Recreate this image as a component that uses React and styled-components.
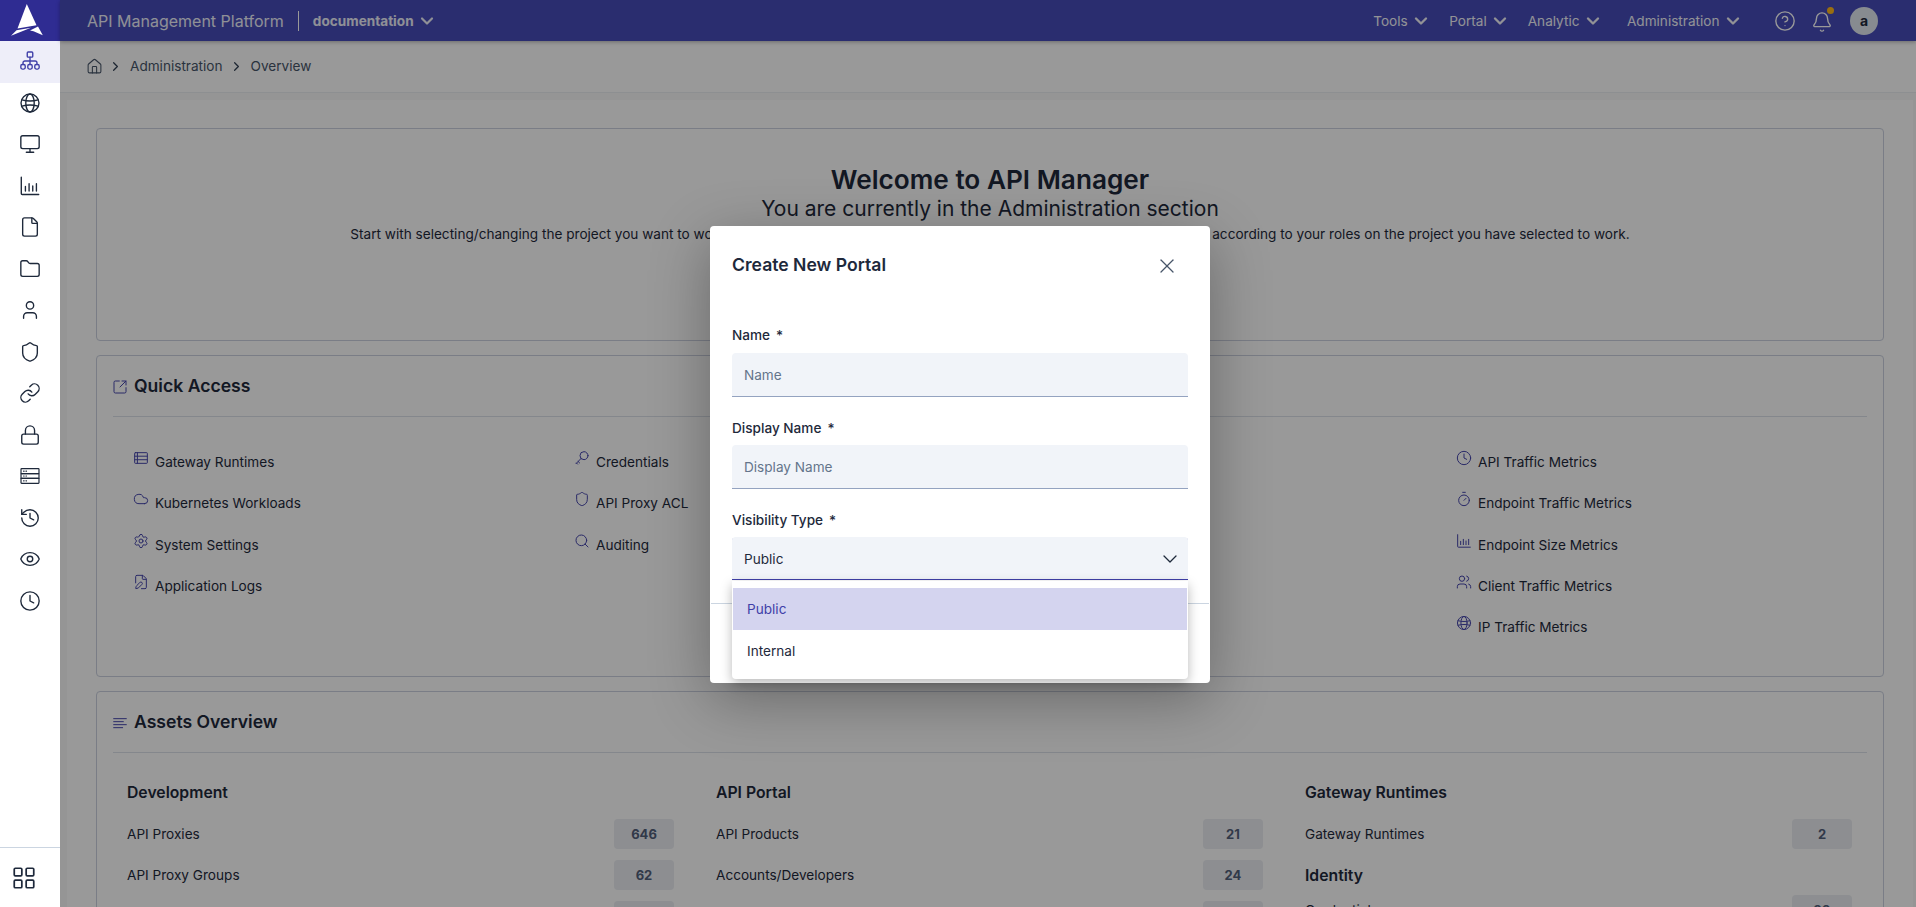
import React from 'react';
import styled, { createGlobalStyle } from 'styled-components';
import {
  Bell,
  ChevronDown,
  ChevronRight,
  CircleHelp,
  Clock,
  Cloud,
  Eye,
  File,
  FilePen,
  Folder,
  History,
  House,
  LayoutGrid,
  Link,
  Lock,
  Monitor,
  Search,
  Settings,
  Shield,
  SquareArrowOutUpRight,
  Timer,
  User,
  Users,
  X,
} from 'lucide-react';

const GlobalStyle = createGlobalStyle`
  html, body {
    margin: 0;
    padding: 0;
    height: 100%;
    overflow: hidden;
    font-family: Inter, "Liberation Sans", sans-serif;
    color: #1e293b;
  }
  * {
    box-sizing: border-box;
  }
`;

const Shell = styled.div`
  position: relative;
  width: 1916px;
  height: 907px;
  display: grid;
  grid-template-columns: 60px 1fr;
  overflow: hidden;
  background: #f8f8f8;
`;

const Sidebar = styled.aside`
  display: flex;
  flex-direction: column;
  height: 907px;
  background: #ffffff;
`;

const LogoBlock = styled.div`
  height: 41px;
  flex: none;
  background: #2f2c92;
  svg {
    display: block;
  }
`;

const SideNav = styled.nav`
  flex: 1;
  display: flex;
  flex-direction: column;
`;

const SideItem = styled.div`
  height: 41.5px;
  flex: none;
  display: flex;
  align-items: center;
  justify-content: center;
  padding-bottom: 1px;
  background: ${(props) => (props.$active ? '#eeeef9' : 'transparent')};
  color: ${(props) => (props.$active ? '#3f3fa8' : '#1e293b')};
`;

const SideFooter = styled.div`
  height: 60px;
  flex: none;
  border-top: 1px solid #cbd5e1;
  display: flex;
  align-items: center;
  padding-left: 11px;
  color: #1e293b;
`;

const MainColumn = styled.div`
  display: flex;
  flex-direction: column;
  min-width: 0;
  height: 907px;
`;

const Header = styled.header`
  height: 41px;
  flex: none;
  position: relative;
  z-index: 1;
  display: flex;
  align-items: center;
  padding: 0 38px 0 27px;
  background: #474cba;
  color: #ffffff;
  box-shadow: 0 1px 4px rgba(0, 0, 0, 0.3);
`;

const PlatformName = styled.div`
  font-size: 16px;
  font-weight: 400;
  color: #eef0fb;
`;

const HeaderDivider = styled.div`
  width: 1px;
  height: 20px;
  margin: 0 14px 0 14px;
  background: #ffffff;
`;

const ProjectName = styled.div`
  display: flex;
  align-items: center;
  gap: 3px;
  font-size: 13.6px;
  font-weight: 700;
  color: #eef0fb;
`;

const HeaderNav = styled.nav`
  margin-left: auto;
  display: flex;
  align-items: center;
`;

const NavItem = styled.div`
  display: flex;
  align-items: center;
  gap: 3.5px;
  margin-left: ${(props) => props.$gap}px;
  font-size: 13.6px;
  font-weight: 400;
  color: #f3f4fb;
`;

const HeaderIcons = styled.div`
  display: flex;
  align-items: center;
  margin-left: 31px;
  gap: 15px;
`;

const BellWrap = styled.div`
  position: relative;
  display: flex;
  align-items: center;
  margin-top: 2px;
`;

const BellDot = styled.span`
  position: absolute;
  top: -4px;
  right: -1px;
  width: 7px;
  height: 7px;
  border-radius: 50%;
  background: #ffb81c;
`;

const Avatar = styled.div`
  width: 28px;
  height: 28px;
  margin-left: 2px;
  border-radius: 50%;
  background: #e2e8f0;
  color: #1e293b;
  display: flex;
  align-items: center;
  justify-content: center;
  font-size: 14px;
  font-weight: 700;
`;

const Breadcrumb = styled.div`
  height: 52px;
  flex: none;
  display: flex;
  align-items: center;
  padding: 0 0 1px 26px;
  background: #ffffff;
  border-bottom: 1px solid #eceef2;
  font-size: 13.6px;
  color: #475569;
`;

const CrumbSep = styled.span`
  display: flex;
  margin: 0 7px 0 ${(props) => (props.$first ? 5 : 6)}px;
  color: #334155;
`;

const Content = styled.main`
  flex: 1;
  min-height: 0;
  padding: 7px 3px 0 7px;
`;

const Panel = styled.div`
  height: 100%;
  background: #ffffff;
  padding: 28px 29px 0;
  display: flex;
  flex-direction: column;
  gap: 14px;
`;

const Card = styled.section`
  flex: none;
  height: ${(props) => props.$height}px;
  border: 1px solid #cbd1df;
  border-radius: 4px;
  padding: 0 16px;
  background: #ffffff;
`;

const Welcome = styled.div`
  padding-top: 35px;
  text-align: center;
`;

const WelcomeTitle = styled.div`
  font-size: 26.2px;
  line-height: 32px;
  font-weight: 600;
`;

const WelcomeSub = styled.div`
  font-size: 21px;
  line-height: 26px;
`;

const WelcomeText = styled.div`
  margin-top: 2px;
  font-size: 13.6px;
  line-height: 20px;
`;

const CardHeader = styled.div`
  height: 61px;
  display: flex;
  align-items: center;
  gap: 6px;
  padding-bottom: 2px;
  border-bottom: 1px solid #dde1ea;
  font-size: 17.6px;
  font-weight: 600;
  color: #1e293b;
  svg {
    color: #4646ad;
    margin: 4px 0 0 -1px;
  }
`;

const QuickGrid = styled.div`
  display: grid;
  grid-template-columns: repeat(4, 441px);
  padding: 24px 0 0 21px;
`;

const QuickColumn = styled.div`
  display: flex;
  flex-direction: column;
`;

const QuickItem = styled.div`
  height: 41.25px;
  display: flex;
  align-items: flex-start;
  padding-top: 11px;
  font-size: 13.6px;
  line-height: 20px;
  svg {
    flex: none;
    margin: -2px 6px 0 -1px;
    color: #4646ad;
  }
`;

const AssetGrid = styled.div`
  display: grid;
  grid-template-columns: repeat(3, 547px);
  column-gap: 42px;
  padding: 24px 0 0 14px;
`;

const AssetColumn = styled.div`
  display: flex;
  flex-direction: column;
  gap: 11px;
`;

const AssetTitle = styled.div`
  height: 30px;
  display: flex;
  align-items: center;
  font-size: 15.75px;
  font-weight: 600;
  margin-bottom: ${(props) => (props.$tight ? '-6px' : '1px')};
`;

const AssetRow = styled.div`
  height: 30px;
  display: flex;
  align-items: center;
  justify-content: space-between;
  font-size: 13.6px;
`;

const AssetLabel = styled.span`
  margin-bottom: 1px;
`;

const Badge = styled.span`
  width: 60px;
  height: 30px;
  display: flex;
  align-items: center;
  justify-content: center;
  border-radius: 4px;
  background: #ebedf2;
  color: #52607a;
  font-size: 13px;
  font-weight: 700;
`;

const Backdrop = styled.div`
  position: absolute;
  top: 0;
  right: 0;
  bottom: 0;
  left: 60px;
  z-index: 10;
  background: rgba(0, 0, 0, 0.4);
`;

const Modal = styled.div`
  position: absolute;
  top: 226px;
  left: 650px;
  width: 500px;
  height: 457px;
  z-index: 11;
  background: #ffffff;
  border-radius: 4px;
  box-shadow: 0 16px 60px rgba(0, 0, 0, 0.32);
  display: flex;
  flex-direction: column;
`;

const ModalHeader = styled.div`
  display: flex;
  align-items: center;
  justify-content: space-between;
  height: 78px;
  flex: none;
  padding: 0 31px 1px 22px;
  font-size: 17.6px;
  font-weight: 600;
`;

const CloseIcon = styled.span`
  display: flex;
  margin-top: 2px;
  color: #475569;
`;

const ModalBody = styled.div`
  height: 299px;
  flex: none;
  padding: 21px 22px 0;
  display: flex;
  flex-direction: column;
  gap: 21px;
`;

const Field = styled.div`
  position: relative;
  display: flex;
  flex-direction: column;
`;

const Label = styled.label`
  height: 20px;
  margin-bottom: ${(props) => (props.$first ? '8px' : '7px')};
  font-size: 13.6px;
  line-height: 20px;
  font-weight: 500;
  span {
    margin-left: 6px;
  }
`;

const TextInput = styled.div`
  height: 44px;
  display: flex;
  align-items: center;
  padding: ${(props) => (props.$nudge ? '1px' : '0')} 12px 0;
  background: #f1f4f9;
  border-bottom: 1px solid #94a3c0;
  border-radius: 4px 4px 0 0;
  font-size: 13.6px;
  color: #64748b;
`;

const SelectBox = styled(TextInput)`
  height: 42.5px;
  justify-content: space-between;
  color: #1e293b;
  border-bottom: 0;
  box-shadow: inset 0 -1px 0 #3f3fa8;
  padding: 1px 6px 0 12px;
`;

const Menu = styled.div`
  position: absolute;
  top: 71px;
  left: 0;
  right: 0;
  height: 98px;
  padding: 7px 1px 0;
  background: #ffffff;
  border-radius: 0 0 4px 4px;
  box-shadow: 0 4px 12px rgba(0, 0, 0, 0.28);
  z-index: 2;
`;

const MenuOption = styled.div`
  height: 42px;
  display: flex;
  align-items: center;
  padding-left: 14px;
  padding-bottom: ${(props) => (props.$selected ? '0' : '1px')};
  font-size: 13.6px;
  background: ${(props) => (props.$selected ? '#d4d4ef' : 'transparent')};
  color: ${(props) => (props.$selected ? '#3f3fa8' : '#1e293b')};
`;

const ModalFooter = styled.div`
  flex: 1;
  border-top: 1px solid #cbd5e1;
  margin: 0 1px;
`;

const LogoMark = () => (
  <svg width="60" height="41" viewBox="0 0 60 41">
    <path d="M26.8 4 L36.5 25.2 L17.5 28.4 Z" fill="#fff" />
    <path d="M16.5 30.2 L31 27.8 L11 35.8 Z" fill="#fff" />
    <path d="M30 30.5 L38 26.5 L42.8 35.2 L33.5 31.2 Z" fill="#fff" />
  </svg>
);

const DrawnIcon = ({ size = 22, children, strokeWidth = 1.5 }) => (
  <svg
    width={size}
    height={size}
    viewBox="0 0 24 24"
    fill="none"
    stroke="currentColor"
    strokeWidth={strokeWidth}
    strokeLinecap="round"
    strokeLinejoin="round"
  >
    {children}
  </svg>
);

const SitemapIcon = (props) => (
  <DrawnIcon {...props}>
    <rect x="9" y="2.2" width="6" height="5.6" rx="1" />
    <path d="M12 7.8v8M4.4 15.8v-1.8a2 2 0 0 1 2-2h11.2a2 2 0 0 1 2 2v1.8" />
    <rect x="2" y="15.8" width="4.8" height="5" rx="1.6" />
    <rect x="9.6" y="15.8" width="4.8" height="5" rx="1.6" />
    <rect x="17.2" y="15.8" width="4.8" height="5" rx="1.6" />
  </DrawnIcon>
);

const BarsIcon = (props) => (
  <DrawnIcon {...props}>
    <path d="M2.5 2.5v17.8a1 1 0 0 0 1 1h18" />
    <path d="M7 17.5v-5M11 17.5v-8M15 17.5v-5.5M19 17.5v-8" />
  </DrawnIcon>
);

const ServerIcon = ({ size }) => (
  <DrawnIcon size={size} strokeWidth={1.3}>
    <rect x="2.2" y="4" width="19.6" height="5.4" rx="0.6" />
    <rect x="2.2" y="9.4" width="19.6" height="5.2" />
    <rect x="2.2" y="14.6" width="19.6" height="5.4" rx="0.6" />
    <path d="M5 6.7h.6M7.6 6.7h.6M5 12h.6M7.6 12h.6M5 17.3h.6M7.6 17.3h.6" />
  </DrawnIcon>
);

const GlobeIcon = (props) => (
  <DrawnIcon {...props}>
    <circle cx="12" cy="12" r="9.8" />
    <ellipse cx="12" cy="12" rx="4.6" ry="9.8" />
    <path d="M3.2 8.6c5.5 1.6 12.1 1.6 17.6 0M3.2 15.4c5.5-1.6 12.1-1.6 17.6 0" />
  </DrawnIcon>
);

const RowsIcon = (props) => (
  <DrawnIcon {...props}>
    <rect x="2.5" y="4" width="19" height="16" rx="1" />
    <path d="M2.5 9.3h19M2.5 14.6h19M6.6 4v16" />
  </DrawnIcon>
);

const KeyIcon = (props) => (
  <DrawnIcon {...props}>
    <circle cx="15" cy="8.5" r="6" />
    <path d="M10.6 12.7 3 20.5M6.2 17.2l2.2 2.2M3.8 19.6l1.6 1.6" />
  </DrawnIcon>
);

const ExpandLinesIcon = (props) => (
  <DrawnIcon {...props}>
    <path d="M2.5 5.5h19M2.5 10h14.5M2.5 14.5h19M2.5 19h13.5" />
  </DrawnIcon>
);

const sideIcons = [SitemapIcon, GlobeIcon, Monitor, BarsIcon, File, Folder, User, Shield, Link, Lock, ServerIcon, History, Eye, Clock];

const quickColumns = [
  [
    [RowsIcon, 'Gateway Runtimes'],
    [Cloud, 'Kubernetes Workloads'],
    [Settings, 'System Settings'],
    [FilePen, 'Application Logs'],
  ],
  [
    [KeyIcon, 'Credentials'],
    [Shield, 'API Proxy ACL'],
    [Search, 'Auditing'],
  ],
  [],
  [
    [Clock, 'API Traffic Metrics'],
    [Timer, 'Endpoint Traffic Metrics'],
    [BarsIcon, 'Endpoint Size Metrics'],
    [Users, 'Client Traffic Metrics'],
    [GlobeIcon, 'IP Traffic Metrics'],
  ],
];

const navItems = [
  { label: 'Tools', gap: 0 },
  { label: 'Portal', gap: 18 },
  { label: 'Analytic', gap: 17.5 },
  { label: 'Administration', gap: 24 },
];

const App = () => {
  return (
    <Shell>
      <GlobalStyle />
      <Sidebar>
        <LogoBlock>
          <LogoMark />
        </LogoBlock>
        <SideNav>
          {sideIcons.map((Icon, index) => (
            <SideItem key={index} $active={index === 0}>
              <Icon size={22} strokeWidth={1.5} />
            </SideItem>
          ))}
        </SideNav>
        <SideFooter>
          <LayoutGrid size={26} strokeWidth={1.6} />
        </SideFooter>
      </Sidebar>

      <MainColumn>
        <Header>
          <PlatformName>API Management Platform</PlatformName>
          <HeaderDivider />
          <ProjectName>
            documentation
            <ChevronDown size={20} strokeWidth={2.6} />
          </ProjectName>
          <HeaderNav>
            {navItems.map((item) => (
              <NavItem key={item.label} $gap={item.gap}>
                {item.label}
                <ChevronDown size={20} strokeWidth={2.8} />
              </NavItem>
            ))}
            <HeaderIcons>
              <CircleHelp size={22} strokeWidth={1.5} />
              <BellWrap>
                <Bell size={22} strokeWidth={1.5} />
                <BellDot />
              </BellWrap>
              <Avatar>a</Avatar>
            </HeaderIcons>
          </HeaderNav>
        </Header>

        <Breadcrumb>
          <House size={17} strokeWidth={1.5} />
          <CrumbSep $first>
            <ChevronRight size={15} strokeWidth={2} />
          </CrumbSep>
          Administration
          <CrumbSep>
            <ChevronRight size={15} strokeWidth={2} />
          </CrumbSep>
          Overview
        </Breadcrumb>

        <Content>
          <Panel>
            <Card $height={213}>
              <Welcome>
                <WelcomeTitle>Welcome to API Manager</WelcomeTitle>
                <WelcomeSub>You are currently in the Administration section</WelcomeSub>
                <WelcomeText>
                  Start with selecting/changing the project you want to work on from the top menus in the header. You can
                  access the relevant sections according to your roles on the project you have selected to work.
                </WelcomeText>
              </Welcome>
            </Card>

            <Card $height={322}>
              <CardHeader>
                <SquareArrowOutUpRight size={16} strokeWidth={1.5} />
                Quick Access
              </CardHeader>
              <QuickGrid>
                {quickColumns.map((column, index) => (
                  <QuickColumn key={index}>
                    {column.map(([Icon, label]) => (
                      <QuickItem key={label}>
                        <Icon size={16} strokeWidth={1.5} />
                        {label}
                      </QuickItem>
                    ))}
                  </QuickColumn>
                ))}
              </QuickGrid>
            </Card>

            <Card $height={322}>
              <CardHeader>
                <ExpandLinesIcon size={16} />
                Assets Overview
              </CardHeader>
              <AssetGrid>
                <AssetColumn>
                  <AssetTitle>Development</AssetTitle>
                  <AssetRow>
                    <AssetLabel>API Proxies</AssetLabel>
                    <Badge>646</Badge>
                  </AssetRow>
                  <AssetRow>
                    <AssetLabel>API Proxy Groups</AssetLabel>
                    <Badge>62</Badge>
                  </AssetRow>
                  <AssetRow>
                    <span />
                    <Badge />
                  </AssetRow>
                </AssetColumn>
                <AssetColumn>
                  <AssetTitle>API Portal</AssetTitle>
                  <AssetRow>
                    <AssetLabel>API Products</AssetLabel>
                    <Badge>21</Badge>
                  </AssetRow>
                  <AssetRow>
                    <AssetLabel>Accounts/Developers</AssetLabel>
                    <Badge>24</Badge>
                  </AssetRow>
                  <AssetRow>
                    <span />
                    <Badge />
                  </AssetRow>
                </AssetColumn>
                <AssetColumn>
                  <AssetTitle>Gateway Runtimes</AssetTitle>
                  <AssetRow>
                    <AssetLabel>Gateway Runtimes</AssetLabel>
                    <Badge>2</Badge>
                  </AssetRow>
                  <AssetTitle $tight>Identity</AssetTitle>
                  <AssetRow>
                    <AssetLabel>Credentials</AssetLabel>
                    <Badge>20</Badge>
                  </AssetRow>
                </AssetColumn>
              </AssetGrid>
            </Card>
          </Panel>
        </Content>
      </MainColumn>

      <Backdrop>
        <Modal>
          <ModalHeader>
            Create New Portal
            <CloseIcon>
              <X size={24} strokeWidth={1.3} />
            </CloseIcon>
          </ModalHeader>
          <ModalBody>
            <Field>
              <Label $first>
                Name<span>*</span>
              </Label>
              <TextInput>Name</TextInput>
            </Field>
            <Field>
              <Label>
                Display Name<span>*</span>
              </Label>
              <TextInput $nudge>Display Name</TextInput>
            </Field>
            <Field>
              <Label>
                Visibility Type<span>*</span>
              </Label>
              <SelectBox>
                Public
                <ChevronDown size={24} strokeWidth={1.3} />
              </SelectBox>
              <Menu>
                <MenuOption $selected>Public</MenuOption>
                <MenuOption>Internal</MenuOption>
              </Menu>
            </Field>
          </ModalBody>
          <ModalFooter />
        </Modal>
      </Backdrop>
    </Shell>
  );
};

export default App;
